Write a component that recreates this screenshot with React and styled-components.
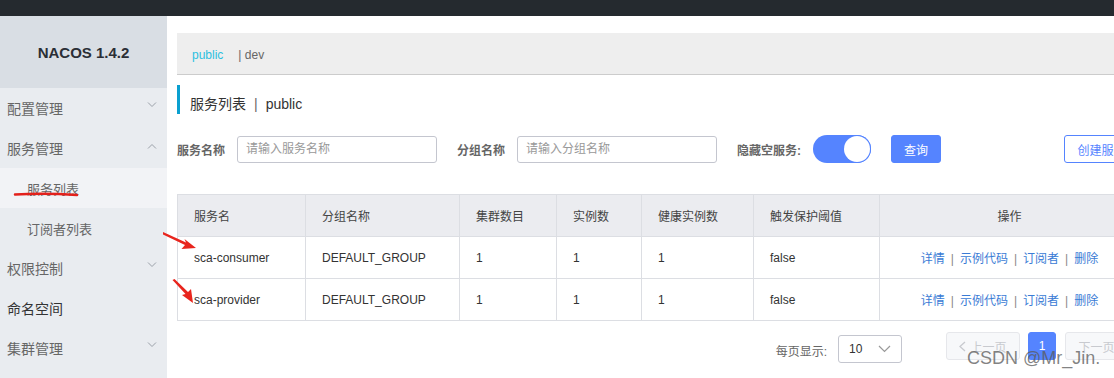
import React from "react";
import styled, { createGlobalStyle } from "styled-components";

const Global = createGlobalStyle`
  html, body { margin: 0; padding: 0; background: #fff; }
  body {
    font-family: "Liberation Sans", Arial, "Noto Sans CJK SC", sans-serif;
    font-size: 12px;
    color: #333;
  }
  * { box-sizing: border-box; }
`;

const Page = styled.div`
  position: relative;
  width: 1114px;
  height: 378px;
  overflow: hidden;
`;

const TopBar = styled.div`
  height: 16px;
  background: #252a2f;
`;

const Layout = styled.div`
  display: flex;
  height: 362px;
`;

const Sidebar = styled.aside`
  flex: none;
  width: 167px;
  background: #e9ecf0;
`;

const Logo = styled.div`
  height: 72px;
  background: #d9dee4;
  display: flex;
  align-items: center;
  justify-content: center;
  font-weight: bold;
  font-size: 15px;
  color: #2b2f36;
`;

const MenuItem = styled.div`
  height: 40px;
  display: flex;
  align-items: center;
  justify-content: space-between;
  padding: 0 10px 0 ${(p) => (p.$sub ? 27 : 7)}px;
  font-size: ${(p) => (p.$sub ? 13 : 14)}px;
  color: ${(p) => (p.$dark ? "#333" : "#666")};
  background: ${(p) => (p.$active ? "#f2f3f6" : "transparent")};
`;

const Chevron = ({ up }) => (
  <svg width="10" height="6" viewBox="0 0 10 6" style={{ marginTop: up ? -4 : -6 }}>
    <polyline
      points={up ? "1,5.5 5,1.5 9,5.5" : "1,0.5 5,4.5 9,0.5"}
      fill="none"
      stroke="#9aa0a8"
      strokeWidth="1"
    />
  </svg>
);

const Main = styled.main`
  flex: none;
  width: 982px;
  padding: 17px 10px 0;
`;

const NsBar = styled.div`
  height: 42px;
  background: #eeeeee;
  border-bottom: 1px solid #cccccc;
  display: flex;
  align-items: center;
  padding: 2px 0 0 15px;
  gap: 15px;
  font-size: 12px;
`;

const NsLink = styled.span`
  color: ${(p) => (p.$active ? "#2cc0e0" : "#666")};
`;

const Title = styled.div`
  margin-top: 10px;
  height: 29px;
  line-height: 20px;
  padding-top: 9px;
  border-left: 3px solid #0aa0d0;
  padding-left: 10px;
  font-size: 14px;
  color: #333;
  span { margin: 0 8px; color: #666; }
`;

const SearchRow = styled.div`
  margin-top: 21px;
  height: 28px;
  display: flex;
  align-items: center;
`;

const Label = styled.label`
  font-weight: bold;
  font-size: 12px;
  color: #666;
  margin-right: 12px;
`;

const Input = styled.input`
  width: 200px;
  height: 27px;
  border: 1px solid #c4c6cf;
  border-radius: 3px;
  padding: 0 8px;
  font: inherit;
  font-size: 12px;
  margin-right: 20px;
  outline: none;
  &::placeholder { color: #999; }
`;

const Switch = styled.div`
  position: relative;
  width: 58px;
  height: 28px;
  border-radius: 14px;
  background: #5584ff;
  margin-right: 20px;
  &::after {
    content: "";
    position: absolute;
    right: 1px;
    top: 1px;
    width: 26px;
    height: 26px;
    border-radius: 50%;
    background: #fff;
    box-shadow: 0 0 0 1px #5584ff;
  }
`;

const Button = styled.button`
  height: 28px;
  width: ${(p) => p.$w}px;
  border-radius: 3px;
  font: inherit;
  font-size: 12px;
  cursor: pointer;
  border: 1px solid #5584ff;
  background: ${(p) => (p.$primary ? "#5584ff" : "#fff")};
  color: ${(p) => (p.$primary ? "#fff" : "#5584ff")};
  padding: 0;
  white-space: nowrap;
`;

const Spacer = styled.div`
  flex: 1;
`;

const Table = styled.table`
  margin-top: 31px;
  width: 962px;
  border-collapse: collapse;
  table-layout: fixed;
  font-size: 12px;
`;

const Th = styled.th`
  height: 42px;
  background: #ebecf0;
  border: 1px solid #dcdee3;
  font-weight: normal;
  color: #444;
  text-align: ${(p) => (p.$center ? "center" : "left")};
  padding: 0 16px;
`;

const Td = styled.td`
  height: 42px;
  border: 1px solid #dcdee3;
  color: #333;
  text-align: ${(p) => (p.$center ? "center" : "left")};
  padding: 0 16px;
  white-space: nowrap;
`;

const OpLink = styled.a`
  color: #3a7bd5;
  text-decoration: none;
`;

const OpSep = styled.span`
  color: #888;
  margin: 0 6px;
`;

const Pager = styled.div`
  margin-top: 11px;
  display: flex;
  align-items: flex-start;
  justify-content: flex-end;
  font-size: 12px;
`;

const PagerLabel = styled.span`
  color: #666;
  margin-top: 10px;
  margin-right: 11px;
`;

const Select = styled.div`
  margin-top: 3px;
  width: 64px;
  height: 28px;
  border: 1px solid #c4c6cf;
  border-radius: 3px;
  display: flex;
  align-items: center;
  justify-content: space-between;
  padding: 0 10px 0 10px;
  color: #333;
  margin-right: 44px;
`;

const PageBtn = styled.div`
  height: 28px;
  width: ${(p) => p.$w}px;
  border-radius: 3px;
  display: flex;
  align-items: center;
  justify-content: center;
  gap: 4px;
  margin-left: ${(p) => p.$ml || 0}px;
  border: 1px solid ${(p) => (p.$current ? "#5584ff" : "#e6e7eb")};
  background: ${(p) => (p.$current ? "#5584ff" : "#f7f8fa")};
  color: ${(p) => (p.$current ? "#fff" : "#c8cacf")};
`;

const Watermark = styled.div`
  position: absolute;
  left: 967px;
  top: 348px;
  font-family: "Liberation Sans", Arial, sans-serif;
  font-size: 18px;
  color: rgba(90, 90, 90, 0.75);
  pointer-events: none;
`;

const Overlay = styled.svg`
  position: absolute;
  left: 0;
  top: 0;
  pointer-events: none;
`;

const columns = [
  { t: "服务名", w: 128 },
  { t: "分组名称", w: 154 },
  { t: "集群数目", w: 97 },
  { t: "实例数", w: 85 },
  { t: "健康实例数", w: 112 },
  { t: "触发保护阈值", w: 126 },
  { t: "操作", w: 260, center: true },
];

const rows = [
  ["sca-consumer", "DEFAULT_GROUP", "1", "1", "1", "false"],
  ["sca-provider", "DEFAULT_GROUP", "1", "1", "1", "false"],
];

const ops = ["详情", "示例代码", "订阅者", "删除"];

export default function App() {
  return (
    <Page>
      <Global />
      <TopBar />
      <Layout>
        <Sidebar>
          <Logo>NACOS 1.4.2</Logo>
          <MenuItem>配置管理<Chevron /></MenuItem>
          <MenuItem>服务管理<Chevron up /></MenuItem>
          <MenuItem $sub $active>服务列表</MenuItem>
          <MenuItem $sub>订阅者列表</MenuItem>
          <MenuItem>权限控制<Chevron /></MenuItem>
          <MenuItem $dark>命名空间</MenuItem>
          <MenuItem>集群管理<Chevron /></MenuItem>
        </Sidebar>
        <Main>
          <NsBar>
            <NsLink $active>public</NsLink>
            <NsLink>| dev</NsLink>
          </NsBar>
          <Title>
            服务列表<span>|</span>public
          </Title>
          <SearchRow>
            <Label>服务名称</Label>
            <Input placeholder="请输入服务名称" />
            <Label>分组名称</Label>
            <Input placeholder="请输入分组名称" />
            <Label>隐藏空服务:</Label>
            <Switch />
            <Button $primary $w={50}>查询</Button>
            <Spacer />
            <Button $w={75}>创建服务</Button>
          </SearchRow>
          <Table>
            <colgroup>
              {columns.map((c) => (
                <col key={c.t} style={{ width: c.w }} />
              ))}
            </colgroup>
            <thead>
              <tr>
                {columns.map((c) => (
                  <Th key={c.t} $center={c.center}>{c.t}</Th>
                ))}
              </tr>
            </thead>
            <tbody>
              {rows.map((r) => (
                <tr key={r[0]}>
                  {r.map((v, i) => (
                    <Td key={i}>{v}</Td>
                  ))}
                  <Td $center>
                    {ops.map((o, i) => (
                      <React.Fragment key={o}>
                        {i > 0 && <OpSep>|</OpSep>}
                        <OpLink href="#">{o}</OpLink>
                      </React.Fragment>
                    ))}
                  </Td>
                </tr>
              ))}
            </tbody>
          </Table>
          <Pager>
            <PagerLabel>每页显示:</PagerLabel>
            <Select>
              <span>10</span>
              <svg width="13" height="8" viewBox="0 0 13 8">
                <polyline points="1,1 6.5,6.5 12,1" fill="none" stroke="#999" strokeWidth="1.2" />
              </svg>
            </Select>
            <PageBtn $w={74}>
              <svg width="7" height="11" viewBox="0 0 7 11">
                <polyline points="6,1 1,5.5 6,10" fill="none" stroke="#c8cacf" strokeWidth="1.3" />
              </svg>
              上一页
            </PageBtn>
            <PageBtn $current $w={28} $ml={8}>1</PageBtn>
            <PageBtn $w={74} $ml={9}>
              下一页
              <svg width="7" height="11" viewBox="0 0 7 11">
                <polyline points="1,1 6,5.5 1,10" fill="none" stroke="#c8cacf" strokeWidth="1.3" />
              </svg>
            </PageBtn>
          </Pager>
        </Main>
      </Layout>
      <Overlay width="1114" height="378" viewBox="0 0 1114 378">
        <path d="M15 194.5 Q45 193 77 195" stroke="#e3201b" strokeWidth="2.5" fill="none" strokeLinecap="round" />
        <path d="M163 232 L186 242.5 L184.5 239 L196 248 L181.5 249 L185 245 L163 234.5 Z" fill="#e8251d" />
        <path d="M172.5 280 L185.5 294 L182 295 L193 303 L191 289 L188 292 L174.5 279 Z" fill="#e8251d" />
      </Overlay>
      <Watermark>CSDN @Mr_Jin.</Watermark>
    </Page>
  );
}
